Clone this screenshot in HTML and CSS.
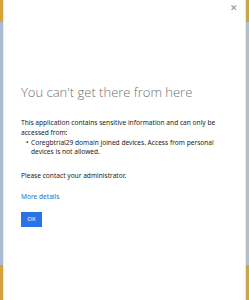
FILE: index.html
```html
<!DOCTYPE html>
<html>
<head>
<meta charset="utf-8">
<link rel="stylesheet" href="styles.css">
</head>
<body>
<div class="frame">
  <div class="strip strip-left"></div>
  <div class="dialog">
    <div class="header">
      <span class="close">&#x2715;</span>
    </div>
    <h1 class="title">You can't get there from here</h1>
    <p class="text">This application contains sensitive information and can only be accessed from:</p>
    <ul class="list">
      <li>Coregbtrial29 domain joined devices. Access from personal devices is not allowed.</li>
    </ul>
    <p class="text contact">Please contact your administrator.</p>
    <a class="link" href="#">More details</a>
    <div class="actions"><button class="ok">OK</button></div>
  </div>
  <div class="strip strip-right"></div>
</div>
</body>
</html>
```
FILE: styles.css
```css
html, body {
  margin: 0;
  padding: 0;
  width: 249px;
  height: 300px;
  overflow: hidden;
  background: #ffffff;
}
.frame {
  display: flex;
  height: 300px;
}
.strip {
  width: 3px;
  flex: none;
}
.strip-left {
  background: linear-gradient(to bottom, #d6a43e 0, #d6a43e 22px, #a8bcd0 22px, #a8bcd0 265px, #d3a13f 265px, #d3a13f 300px);
}
.strip-right {
  background: linear-gradient(to bottom, #c9a34a 0, #c9a34a 22px, #b4bec7 22px, #b4bec7 265px, #c8a44c 265px, #c8a44c 300px);
}
.dialog {
  flex: 1;
  background: #ffffff;
  padding: 0 20px 0 17px;
  font-family: "Noto Sans", "Open Sans", sans-serif;
  color: #222;
  border-left: 1px solid #e6eaee;
  border-right: 1px solid #e6eaee;
}
.header {
  display: flex;
  justify-content: flex-end;
  height: 18px;
  margin-right: -13px;
  padding-top: 3px;
}
.close {
  font-size: 9px;
  color: #8a8a8a;
  line-height: 10px;
}
.title {
  margin: 62px 0 0;
  font-family: "Open Sans", sans-serif;
  font-weight: 300;
  font-size: 13px;
  line-height: 18px;
  color: #707070;
  white-space: nowrap;
}
.text {
  margin: 17px 0 0;
  font-size: 6.6px;
  line-height: 9.8px;
}
.list {
  margin: 0;
  padding: 0 0 0 10px;
  list-style: none;
  font-size: 6.6px;
  line-height: 9.8px;
}
.list li {
  position: relative;
}
.list li::before {
  content: "\2022";
  position: absolute;
  left: -5px;
}
.contact {
  margin-top: 14px;
}
.link {
  display: block;
  margin-top: 11px;
  font-size: 6.6px;
  line-height: 9.8px;
  color: #2a6dc0;
  text-decoration: none;
}
.actions {
  margin-top: 10px;
}
.ok {
  display: block;
  width: 21px;
  height: 15px;
  padding: 0;
  border: none;
  background: #2b72e6;
  color: #ffffff;
  font-family: "Noto Sans", sans-serif;
  font-size: 6px;
}
```
